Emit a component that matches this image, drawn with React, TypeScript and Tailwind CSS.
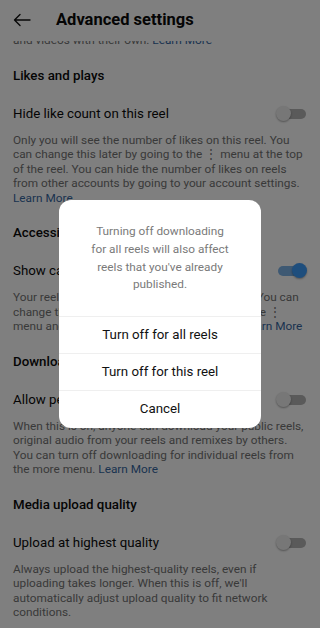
import React from "react";

function Toggle({ on = false }: { on?: boolean }) {
  return (
    <div className="relative w-[31px] h-[16px] shrink-0">
      <div
        className={`absolute left-[2px] right-[1px] top-[3px] h-[10px] rounded-full ${
          on ? "bg-[#7db2e6]" : "bg-[#b4b4b4]"
        }`}
      />
      <div
        className={`absolute top-0 w-[15px] h-[15px] rounded-full shadow-[0_1px_2px_rgba(0,0,0,0.35)] ${
          on ? "right-0 bg-[#3d9cfb]" : "left-0 bg-[#eeeeee]"
        }`}
      />
    </div>
  );
}

function LearnMore() {
  return <span className="text-[#3566a0]">Learn More</span>;
}

function Section({
  heading,
  row,
  on,
  lines,
}: {
  heading: string;
  row: string;
  on?: boolean;
  lines: React.ReactNode[];
}) {
  return (
    <div className="mt-[18px]">
      <div className="h-[20px] flex items-center text-[13.3px] font-medium text-[#0a0a0a]">{heading}</div>
      <div className="mt-[18px] h-[20px] flex items-center justify-between">
        <span className="text-[13.3px] text-[#0a0a0a]">{row}</span>
        <Toggle on={on} />
      </div>
      <div className="mt-[9px] text-[11.8px] leading-[14.5px] text-[#737373]">
        {lines.map((l, i) => (
          <div key={i} className="whitespace-nowrap">
            {l}
          </div>
        ))}
      </div>
    </div>
  );
}

export default function App() {
  return (
    <div className="relative w-full h-[628px] overflow-hidden bg-white font-['Roboto','Liberation_Sans',sans-serif]">
      {/* Header */}
      <div className="relative z-10 h-[41px] bg-white flex items-center pl-[13px] pb-[1px]">
        <svg width="18" height="14" viewBox="0 0 18 14" fill="none" stroke="#111" strokeWidth="1.4" strokeLinecap="round" strokeLinejoin="round">
          <path d="M17 7H1.5M7 1.5L1.5 7L7 12.5" />
        </svg>
        <h1 className="ml-[25px] text-[16.5px] font-bold text-[#0a0a0a]">Advanced settings</h1>
      </div>

      {/* Settings list */}
      <div className="-mt-[8px] px-[13px]">
        <div className="text-[11.8px] leading-[14.5px] text-[#737373] whitespace-nowrap">
          and videos with their own. <LearnMore />
        </div>

        <Section
          heading="Likes and plays"
          row="Hide like count on this reel"
          lines={[
            "Only you will see the number of likes on this reel. You",
            "can change this later by going to the ⋮ menu at the top",
            "of the reel. You can hide the number of likes on reels",
            "from other accounts by going to your account settings.",
            <LearnMore key="lm" />,
          ]}
        />

        <Section
          heading="Accessibility"
          row="Show captions"
          on
          lines={[
            "Your reel will include auto-generated captions. You can",
            "change this later by going to a reel and using the ⋮",
            <span key="l3">
              menu and selecting Manage captions for it. <LearnMore />
            </span>,
          ]}
        />

        <Section
          heading="Downloads"
          row="Allow people to download your reels"
          lines={[
            "When this is on, anyone can download your public reels,",
            "original audio from your reels and remixes by others.",
            "You can turn off downloading for individual reels from",
            <span key="l4">
              the more menu. <LearnMore />
            </span>,
          ]}
        />

        <Section
          heading="Media upload quality"
          row="Upload at highest quality"
          lines={[
            "Always upload the highest-quality reels, even if",
            "uploading takes longer. When this is off, we'll",
            "automatically adjust upload quality to fit network",
            "conditions.",
          ]}
        />
      </div>

      {/* Dim overlay + dialog */}
      <div className="absolute inset-0 z-20 bg-black/50 flex items-center justify-center">
        <div className="w-[202px] bg-white rounded-[12px] overflow-hidden">
          <p className="pt-[23px] pb-[22px] px-[10px] text-center text-[11.8px] leading-[17.7px] text-[#7a7a7a]">
            Turning off downloading
            <br />
            for all reels will also affect
            <br />
            reels that you've already
            <br />
            published.
          </p>
          <div className="border-t border-[#efefef] h-[37px] flex items-center justify-center text-[13.3px] text-[#111]">
            Turn off for all reels
          </div>
          <div className="border-t border-[#efefef] h-[37px] flex items-center justify-center text-[13.3px] text-[#111]">
            Turn off for this reel
          </div>
          <div className="border-t border-[#efefef] h-[38px] flex items-center justify-center text-[13.3px] text-[#111]">
            Cancel
          </div>
        </div>
      </div>
    </div>
  );
}
